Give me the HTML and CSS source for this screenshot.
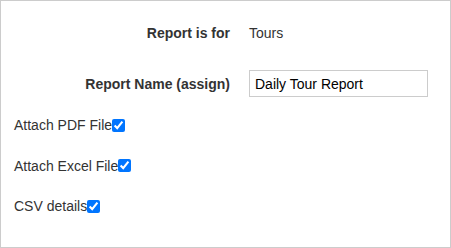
FILE: index.html
```html
<!DOCTYPE html>
<html>
<head>
<meta charset="utf-8">
<link rel="stylesheet" href="styles.css">
</head>
<body>
<div class="panel">
  <div class="row info-row">
    <div class="label">Report is for</div>
    <div class="value">Tours</div>
  </div>
  <div class="row name-row">
    <label class="label" for="rname">Report Name (assign)</label>
    <input id="rname" class="text-input" type="text" value="Daily Tour Report">
  </div>
  <div class="checks">
    <label class="check">Attach PDF File<input type="checkbox" checked></label>
    <label class="check">Attach Excel File<input type="checkbox" checked></label>
    <label class="check">CSV details<input type="checkbox" checked></label>
  </div>
</div>
</body>
</html>
```
FILE: styles.css
```css
html, body {
  margin: 0;
  padding: 0;
  background: #fff;
}
.panel {
  box-sizing: border-box;
  width: 451px;
  height: 248px;
  border: 1px solid #cccccc;
  font-family: "Liberation Sans", Arial, sans-serif;
  font-size: 14px;
  color: #333;
  padding-top: 22px;
}
.row {
  display: grid;
  grid-template-columns: 229px 179px;
  column-gap: 19px;
  align-items: center;
}
.label {
  text-align: right;
  font-weight: bold;
}
.value {
  line-height: 20px;
}
.info-row {
  height: 20px;
}
.name-row {
  margin-top: 27px;
}
.text-input {
  box-sizing: border-box;
  width: 179px;
  height: 27px;
  margin: 0;
  border: 1px solid #cccccc;
  padding: 0 5px;
  font-family: "Liberation Sans", Arial, sans-serif;
  font-size: 14px;
  color: #000;
  outline: none;
}
.checks {
  display: flex;
  flex-direction: column;
  gap: 20.5px;
  padding-left: 13px;
  margin-top: 18px;
}
.check {
  display: flex;
  align-items: center;
  height: 20px;
}
.check input {
  width: 13px;
  height: 13px;
  margin: 0;
  accent-color: #0075ff;
}
```
